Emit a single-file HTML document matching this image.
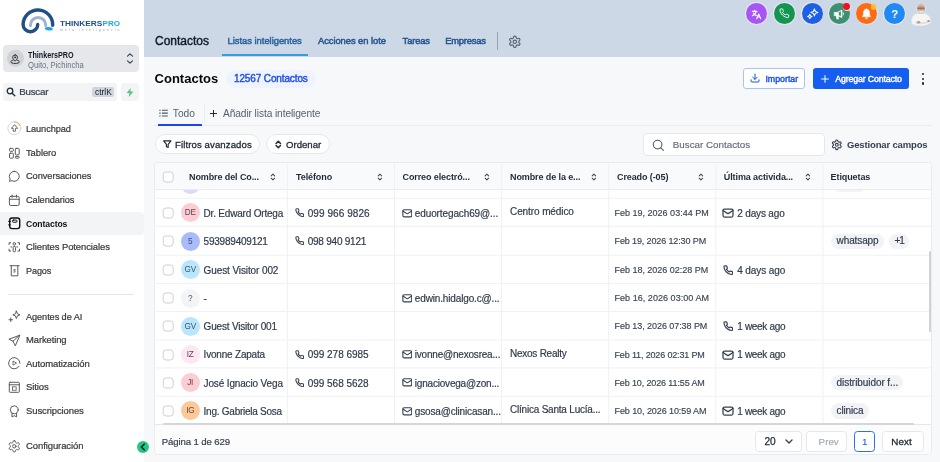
<!DOCTYPE html>
<html lang="es"><head><meta charset="utf-8"><title>Contactos</title>
<style>
*{box-sizing:border-box;margin:0;padding:0}
html,body{width:940px;height:462px;overflow:hidden;background:#f7f8fa;font-family:"Liberation Sans",sans-serif;color:#1f2937}
.abs{position:absolute}
#sb{position:absolute;left:0;top:0;width:144px;height:462px;background:#fff}
#hdr{position:absolute;left:144px;top:0;width:796px;height:56.6px;background:#cdd8e6}
#main{position:absolute;left:0;top:0;width:940px;height:462px}
#sb,#hdr,#main{will-change:transform}
.t{position:absolute;white-space:nowrap;line-height:1;transform-origin:0 50%}
.nav{position:absolute;left:26.1px;font-size:9.9px;color:#35383c;white-space:nowrap;line-height:12px;letter-spacing:-0.1px;-webkit-text-stroke:0.22px #35383c;transform:scaleX(0.943);transform-origin:0 50%}
.ht{top:35.8px;font-size:9.4px;color:#24538f;-webkit-text-stroke:0.48px currentColor}
.circ{position:absolute;top:4px;width:21px;height:21px;border-radius:50%}
.th{font-size:9px;font-weight:bold;color:#1f2937;letter-spacing:-0.1px}
.c{font-size:10px;color:#2f3949;-webkit-text-stroke:0.18px #2f3949}
.dt{font-size:9px;color:#3a4453;-webkit-text-stroke:0.15px #3a4453}
.av{width:19px;height:19px;border-radius:50%;font-size:8.2px;line-height:20.6px;text-align:center;letter-spacing:-0.3px;-webkit-text-stroke:0}
.tag{height:15.3px;border-radius:8px;background:#f1f3f6}
</style></head><body>
<div id="sb">
<svg class="abs" style="left:18px;top:5px" width="110" height="32" viewBox="0 0 110 32">
<path d="M34.7 20.2 A14.8 14.8 0 0 0 5.1 19.4 A7.3 7.3 0 0 0 19.7 19.4" fill="none" stroke="#1e4f86" stroke-width="3.4" stroke-linecap="round"/>
<path d="M12.5 20.6 V20 A7.6 7.6 0 0 1 27.7 20 V20.6" fill="none" stroke="#9fb3cf" stroke-width="3" stroke-linecap="round"/>
<ellipse cx="30.9" cy="23.8" rx="4" ry="1.7" fill="#1fa9e6" transform="rotate(8 30.9 23.8)"/>
<text x="42" y="20.8" font-family="Liberation Sans, sans-serif" font-weight="bold" font-size="6.5" fill="#1e4f86" textLength="42.4" lengthAdjust="spacingAndGlyphs">THINKERS</text>
<text x="84.6" y="20.8" font-family="Liberation Sans, sans-serif" font-weight="bold" font-size="6.5" fill="#1fa9e6" textLength="17.4" lengthAdjust="spacingAndGlyphs">PRO</text>
<text x="42" y="26.1" font-family="Liberation Sans, sans-serif" font-size="3.4" fill="#93a7c6" textLength="59.5" lengthAdjust="spacing">meta inteligencia</text>
</svg>
<div class="abs" style="left:3px;top:45px;width:136px;height:27px;background:#e5e7eb;border-radius:4px"></div>
<svg class="abs" style="left:6px;top:48px" width="20" height="20" viewBox="0 0 20 20"><circle cx="9.45" cy="10.35" r="8.5" fill="#d1d2d5"/></svg>
<svg class="abs" style="left:10.4px;top:53.6px" width="10.2" height="10.2" viewBox="0 0 10 10" fill="none" stroke="#2f3136" stroke-width="0.95" stroke-linecap="round" stroke-linejoin="round"><path d="M5 0.9 A2.4 2.4 0 0 1 7.4 3.3 C7.4 5 5 7 5 7 S2.6 5 2.6 3.3 A2.4 2.4 0 0 1 5 0.900000 Z"/><circle cx="5" cy="3.3" r="0.55" fill="#2f3136"/><path d="M3 6.1 C1.600000 6.5 0.8 7.1 0.8 7.7 C0.8 8.7 2.7 9.3 5 9.3 S9.2 8.7 9.2 7.7 C9.2 7.1 8.4 6.5 7 6.1"/></svg>
<div class="t" style="left:28.4px;top:50.8px;font-size:8.4px;font-weight:bold;color:#111827;transform:scaleX(0.857)">ThinkersPRO</div>
<div class="t" style="left:28.4px;top:61.8px;font-size:8.2px;color:#6b7280;transform:scaleX(0.935)">Quito, Pichincha</div>
<svg class="abs" style="left:126px;top:52px" width="8" height="13" viewBox="0 0 8 13" fill="none" stroke="#374151" stroke-width="1.15" stroke-linecap="round" stroke-linejoin="round"><path d="M1.5 4.2 L4 1.8 L6.5 4.2M1.5 8.8 L4 11.2 L6.5 8.8"/></svg>
<div class="abs" style="left:3px;top:83px;width:114px;height:18px;background:#f3f4f6;border-radius:3px"></div>
<svg class="abs" style="left:6px;top:87px" width="10" height="10" viewBox="0 0 10 10" fill="none" stroke="#1f2937" stroke-width="1.3" stroke-linecap="round"><circle cx="4" cy="4" r="2.8"/><path d="M6.2 6.2 L8.8 8.8"/></svg>
<div class="t" style="left:19.2px;top:87.1px;font-size:9.8px;color:#333b48;letter-spacing:-0.25px;-webkit-text-stroke:0.2px #333b48">Buscar</div>
<div class="abs" style="left:92px;top:86.8px;width:21.6px;height:10.6px;background:#d1d5db;border-radius:2px"></div>
<div class="t" style="left:95px;top:87.8px;font-size:8.4px;color:#111827">ctrlK</div>
<div class="abs" style="left:121px;top:83px;width:18px;height:18px;background:#f3f4f6;border-radius:3px"></div>
<svg class="abs" style="left:126px;top:88px" width="8" height="9" viewBox="0 0 8 9"><path d="M4.8 0 L0.6 5 H3.4 L2.8 9 L7.4 3.6 H4.4 Z" fill="#52c47e"/></svg>
<div class="abs" style="left:0;top:212.1px;width:144px;height:23.1px;background:#f3f4f6;border-radius:0 4px 4px 0"></div>
<div class="abs" style="left:8px;top:293.5px;width:126px;height:1px;background:#e5e7eb"></div>
<svg class="abs" style="left:7.1px;top:121.4px" width="14.6" height="14.6" viewBox="0 0 14 14" fill="none" stroke="#55585e" stroke-width="0.95" stroke-linecap="round"><circle cx="7" cy="7" r="6.2" stroke="#d1d5db" stroke-width="0.9"/><path d="M7 0.8 A6.2 6.2 0 0 1 12.6 4.4" stroke="#f59e5b" stroke-width="0.9"/><path d="M7 3.8 L4.2 7 H5.9 V9.8 H8.1 V7 H9.8 Z" stroke="#4b5563" stroke-width="0.8" stroke-linejoin="round"/></svg>
<div class="nav" style="top:122.7px;transform:scaleX(0.934)">Launchpad</div>
<svg class="abs" style="left:7.1px;top:145.5px" width="14.6" height="14.6" viewBox="0 0 14 14" fill="none" stroke="#55585e" stroke-width="0.95" stroke-linecap="round"><rect x="2.4" y="2.3" width="3.7" height="2.8" rx="0.8"/><rect x="8" y="2.3" width="3.7" height="6.2" rx="0.8"/><rect x="2.4" y="6.9" width="3.7" height="4.8" rx="0.8"/><rect x="8" y="10" width="3.7" height="1.7" rx="0.7"/></svg>
<div class="nav" style="top:146.8px;transform:scaleX(0.954)">Tablero</div>
<svg class="abs" style="left:7.1px;top:168.8px" width="14.6" height="14.6" viewBox="0 0 14 14" fill="none" stroke="#55585e" stroke-width="0.95" stroke-linecap="round"><path d="M7 2.2 A4.8 4.8 0 1 1 4.6 11.2 L2.4 11.8 L3 9.6 A4.8 4.8 0 0 1 7 2.2 Z"/></svg>
<div class="nav" style="top:170.1px;transform:scaleX(0.941)">Conversaciones</div>
<svg class="abs" style="left:7.1px;top:192.6px" width="14.6" height="14.6" viewBox="0 0 14 14" fill="none" stroke="#55585e" stroke-width="0.95" stroke-linecap="round"><rect x="2.3" y="3.2" width="9.4" height="8.8" rx="1.4"/><path d="M2.3 6 H11.7 M4.9 2 V4.2 M9.1 2 V4.2"/></svg>
<div class="nav" style="top:193.9px;transform:scaleX(0.936)">Calendarios</div>
<svg class="abs" style="left:7.1px;top:216.3px" width="14.6" height="14.6" viewBox="0 0 14 14" fill="none" stroke="#55585e" stroke-width="0.95" stroke-linecap="round"><rect x="2.6" y="1.9" width="9.6" height="10.2" rx="2.2" stroke="#111" stroke-width="1.35"/><path d="M1.7 5.2 H3 M1.7 8.4 H3" stroke="#111" stroke-width="1.2"/><rect x="5.2" y="3.9" width="4.4" height="2.1" rx="1" stroke="#111" stroke-width="0.95"/></svg>
<div class="nav" style="top:217.6px;font-weight:bold;color:#111;-webkit-text-stroke:0;letter-spacing:-0.1px;transform:scaleX(0.872)">Contactos</div>
<svg class="abs" style="left:7.1px;top:240.1px" width="14.6" height="14.6" viewBox="0 0 14 14" fill="none" stroke="#55585e" stroke-width="0.95" stroke-linecap="round"><circle cx="7" cy="3.6" r="1.2"/><rect x="5.9" y="6" width="2.2" height="5.4" rx="1.1"/><path d="M2 4.400000 V2.6 H3.6 M12 4.4 V2.6 H10.4 M2 8.8 V10.6 H3.6 M12 8.8 V10.6 H10.4 M3.8 6.7 H4.6 M9.4 6.7 H10.2" stroke-width="0.95"/></svg>
<div class="nav" style="top:241.4px;transform:scaleX(0.958)">Clientes Potenciales</div>
<svg class="abs" style="left:7.1px;top:263.4px" width="14.6" height="14.6" viewBox="0 0 14 14" fill="none" stroke="#55585e" stroke-width="0.95" stroke-linecap="round"><path d="M4.1 2.6 V12.3 H10.4 V2.6 M2.9 2.6 H11.6"/><path d="M8 6.2 H6.6 V7.4 H7.8 V8.700000 H6.3" stroke-width="0.7"/></svg>
<div class="nav" style="top:264.7px;transform:scaleX(0.918)">Pagos</div>
<svg class="abs" style="left:7.1px;top:309.4px" width="14.6" height="14.6" viewBox="0 0 14 14" fill="none" stroke="#55585e" stroke-width="0.95" stroke-linecap="round"><path d="M9 2 L10 4.6 L12.4 5.6 L10 6.6 L9 9.2 L8 6.6 L5.6 5.6 L8 4.6 Z"/><path d="M3.6 8.6 V12 M1.9 10.3 H5.3" /></svg>
<div class="nav" style="top:310.7px;transform:scaleX(0.933)">Agentes de AI</div>
<svg class="abs" style="left:7.1px;top:332.8px" width="14.6" height="14.6" viewBox="0 0 14 14" fill="none" stroke="#55585e" stroke-width="0.95" stroke-linecap="round"><path d="M12 2.2 L1.8 6 L5.8 7.8 L7.8 12 Z M5.8 7.8 L12 2.2"/></svg>
<div class="nav" style="top:334.1px;transform:scaleX(0.954)">Marketing</div>
<svg class="abs" style="left:7.1px;top:356.4px" width="14.6" height="14.6" viewBox="0 0 14 14" fill="none" stroke="#55585e" stroke-width="0.95" stroke-linecap="round"><path d="M11.6 9.8 A5.4 5.4 0 1 1 12.4 7"/><path d="M5.8 5.2 V8.8 L8.8 7 Z" stroke-width="0.8"/></svg>
<div class="nav" style="top:357.7px;transform:scaleX(0.962)">Automatización</div>
<svg class="abs" style="left:7.1px;top:380.1px" width="14.6" height="14.6" viewBox="0 0 14 14" fill="none" stroke="#55585e" stroke-width="0.95" stroke-linecap="round"><rect x="2.2" y="2.2" width="9.6" height="9.6" rx="0.8"/><path d="M2.2 4.6 H11.8"/><rect x="5.2" y="6.6" width="3.6" height="3.2" stroke-width="0.8"/></svg>
<div class="nav" style="top:381.4px;transform:scaleX(0.966)">Sitios</div>
<svg class="abs" style="left:7.1px;top:403.7px" width="14.6" height="14.6" viewBox="0 0 14 14" fill="none" stroke="#55585e" stroke-width="0.95" stroke-linecap="round"><circle cx="7" cy="5.6" r="3.8"/><path d="M4.8 8.8 V12.4 L7 11.2 L9.2 12.4 V8.8"/></svg>
<div class="nav" style="top:405.0px;transform:scaleX(0.960)">Suscripciones</div>
<svg class="abs" style="left:7.1px;top:438.8px" width="14.6" height="14.6" viewBox="0 0 14 14" fill="none" stroke="#55585e" stroke-width="0.95" stroke-linecap="round"><g transform="scale(0.5417) translate(0.9,0.9)" stroke-width="1.75" stroke-linejoin="round"><path d="M12.22 2h-.44a2 2 0 0 0-2 2v.18a2 2 0 0 1-1 1.73l-.43.25a2 2 0 0 1-2 0l-.15-.08a2 2 0 0 0-2.73.73l-.22.38a2 2 0 0 0 .73 2.73l.15.1a2 2 0 0 1 1 1.72v.51a2 2 0 0 1-1 1.74l-.15.09a2 2 0 0 0-.73 2.73l.22.38a2 2 0 0 0 2.73.73l.15-.08a2 2 0 0 1 2 0l.43.25a2 2 0 0 1 1 1.73V20a2 2 0 0 0 2 2h.44a2 2 0 0 0 2-2v-.18a2 2 0 0 1 1-1.73l.43-.25a2 2 0 0 1 2 0l.15.08a2 2 0 0 0 2.73-.73l.22-.39a2 2 0 0 0-.73-2.73l-.15-.08a2 2 0 0 1-1-1.74v-.5a2 2 0 0 1 1-1.74l.15-.09a2 2 0 0 0 .73-2.73l-.22-.38a2 2 0 0 0-2.73-.73l-.15.08a2 2 0 0 1-2 0l-.43-.25a2 2 0 0 1-1-1.73V4a2 2 0 0 0-2-2z"/><circle cx="12" cy="12" r="3"/></g></svg>
<div class="nav" style="top:440.1px;transform:scaleX(0.962)">Configuración</div>
</div>
<div class="abs" style="left:135.6px;top:439.8px;width:14.6px;height:14.6px;border-radius:50%;background:#fff;z-index:5"></div><div class="abs" style="left:136.5px;top:440.7px;width:12.8px;height:12.8px;border-radius:50%;background:#20c888;z-index:5"></div>
<svg class="abs" style="left:136.9px;top:441.1px;z-index:6" width="12" height="12" viewBox="0 0 12 12" fill="none" stroke="#0b1a14" stroke-width="1.5" stroke-linecap="round" stroke-linejoin="round"><path d="M7.4 3 L4.4 6 L7.4 9"/></svg>
<div id="hdr">
<div class="t" style="left:11px;top:34.8px;font-size:12px;color:#111827;-webkit-text-stroke:0.4px #111827">Contactos</div>
<div class="t ht" style="left:83.6px;color:#2b62a0;letter-spacing:-0.02px">Listas inteligentes</div>
<div class="abs" style="left:78px;top:54px;width:86px;height:2px;background:#3b9ad9"></div>
<div class="t ht" style="left:174px;letter-spacing:-0.06px">Acciones en lote</div>
<div class="t ht" style="left:258.6px;letter-spacing:-0.15px">Tareas</div>
<div class="t ht" style="left:301.2px;letter-spacing:-0.22px">Empresas</div>
<div class="abs" style="left:352.5px;top:32px;width:1px;height:18px;background:#9ca3af"></div>
<svg class="abs" style="left:363.5px;top:34.6px" width="13.6" height="13.6" viewBox="0 0 24 24" fill="none" stroke="#5a6270" stroke-width="2" stroke-linejoin="round"><path d="M12.22 2h-.44a2 2 0 0 0-2 2v.18a2 2 0 0 1-1 1.73l-.43.25a2 2 0 0 1-2 0l-.15-.08a2 2 0 0 0-2.73.73l-.22.38a2 2 0 0 0 .73 2.73l.15.1a2 2 0 0 1 1 1.72v.51a2 2 0 0 1-1 1.74l-.15.09a2 2 0 0 0-.73 2.73l.22.38a2 2 0 0 0 2.73.73l.15-.08a2 2 0 0 1 2 0l.43.25a2 2 0 0 1 1 1.73V20a2 2 0 0 0 2 2h.44a2 2 0 0 0 2-2v-.18a2 2 0 0 1 1-1.73l.43-.25a2 2 0 0 1 2 0l.15.08a2 2 0 0 0 2.73-.73l.22-.39a2 2 0 0 0-.73-2.73l-.15-.08a2 2 0 0 1-1-1.74v-.5a2 2 0 0 1 1-1.74l.15-.09a2 2 0 0 0 .73-2.73l-.22-.38a2 2 0 0 0-2.73-.73l-.15.08a2 2 0 0 1-2 0l-.43-.25a2 2 0 0 1-1-1.73V4a2 2 0 0 0-2-2z"/><circle cx="12" cy="12" r="3"/></svg>
<div class="abs" style="left:601.2px;top:2.4px;width:22.6px;height:22.6px;border-radius:50%;background:#e3e6f3"></div>
<div class="abs" style="left:602.0px;top:3.2px;width:21.0px;height:21.0px;border-radius:50%;background:#a855f5"></div>
<svg class="abs" style="left:607.2px;top:8.5px" width="11" height="11" viewBox="0 0 24 24" fill="none" stroke="#fff" stroke-width="2.6" stroke-linecap="round" stroke-linejoin="round"><path d="M3 5h10M8 3v2M11.5 5c-.8 4.2-3.7 7.6-8 9.5M5.5 9c1 2.2 3.2 4.4 6 5.5"/><path d="M12.5 21l4.2-10 4.3 10M14 17.5h5.6"/></svg>
<div class="abs" style="left:629.1px;top:2.4px;width:22.6px;height:22.6px;border-radius:50%;background:#e6e3f1"></div>
<div class="abs" style="left:629.9px;top:3.2px;width:21.0px;height:21.0px;border-radius:50%;background:#12964f"></div>
<svg class="abs" style="left:635.1px;top:8.4px" width="10.5" height="10.5" viewBox="0 0 24 24" fill="none" stroke="#fff" stroke-width="2.1" stroke-linecap="round" stroke-linejoin="round"><path d="M22 16.92v3a2 2 0 0 1-2.18 2 19.79 19.79 0 0 1-8.63-3.07 19.5 19.5 0 0 1-6-6 19.79 19.79 0 0 1-3.07-8.67A2 2 0 0 1 4.11 2h3a2 2 0 0 1 2 1.72 12.84 12.84 0 0 0 .7 2.81 2 2 0 0 1-.45 2.11L8.09 9.91a16 16 0 0 0 6 6l1.27-1.27a2 2 0 0 1 2.11-.45 12.84 12.84 0 0 0 2.81.7A2 2 0 0 1 22 16.92z"/></svg>
<div class="abs" style="left:656.7px;top:2.4px;width:22.6px;height:22.6px;border-radius:50%;background:#e9e6e0"></div>
<div class="abs" style="left:657.5px;top:3.2px;width:21.0px;height:21.0px;border-radius:50%;background:#1d5fe6"></div>
<svg class="abs" style="left:661.5px;top:7.2px" width="13" height="13" viewBox="0 0 24 24" fill="none" stroke="#fff" stroke-width="1.9" stroke-linecap="round" stroke-linejoin="round"><path d="M15.5 3.5 L17.3 8.2 L22 10 L17.3 11.8 L15.5 16.5 L13.7 11.8 L9 10 L13.7 8.2 Z"/><path d="M7 13.5 L8.2 16.3 L11 17.5 L8.2 18.7 L7 21.5 L5.8 18.7 L3 17.5 L5.8 16.3 Z"/></svg>
<div class="abs" style="left:683.8px;top:2.6px;width:22.6px;height:22.6px;border-radius:50%;background:#e6e3f1"></div>
<div class="abs" style="left:684.6px;top:3.4px;width:21.0px;height:21.0px;border-radius:50%;background:#3f8f72"></div>
<svg class="abs" style="left:688.5px;top:7.9px" width="12.6" height="12.6" viewBox="0 0 24 24"  stroke-linecap="round" stroke-linejoin="round"><path d="M3 8.5 H8 L17 4 V18 L8 14.5 H3 Z M6 14.5 L7.5 21 H10.5 L9.5 14.5 M19.5 8.5 Q21.5 11 19.5 13.5" fill="#fff" stroke="#fff" stroke-width="1.4"/><path d="M11 8.2 L15 6.4 V15.4 L11 13.8 Z" fill="#3f8f72" stroke="none"/></svg>
<div class="abs" style="left:698.7px;top:2.6px;width:8.2px;height:8.2px;border-radius:50%;background:#dcecf0"></div>
<div class="abs" style="left:699.4px;top:3.3px;width:6.8px;height:6.8px;border-radius:50%;background:#f5101e"></div>
<div class="abs" style="left:711.5px;top:2.5px;width:22.8px;height:22.8px;border-radius:50%;background:#d5e6f5"></div>
<div class="abs" style="left:712.3px;top:3.3px;width:21.2px;height:21.2px;border-radius:50%;background:#ff6a13"></div>
<svg class="abs" style="left:717.4px;top:8.1px" width="11" height="12" viewBox="0 0 22 24"  stroke-linecap="round" stroke-linejoin="round"><path d="M11 2.2 C6.6 2.2 5 6 5 9.4 V13 L2.8 17.4 H19.2 L17 13 V9.400000000000001 C17 6 15.4 2.2 11 2.2 Z M8.8 20 A2.3 2.3 0 0 0 13.2 20 Z" fill="#fff" stroke="#fff" stroke-width="1"/></svg>
<div class="abs" style="left:726.9px;top:4.3px;width:5.4px;height:5.4px;border-radius:50%;background:#fbbf24"></div>
<div class="abs" style="left:739.2px;top:2.6px;width:22.6px;height:22.6px;border-radius:50%;background:#ece4df"></div>
<div class="abs" style="left:740.0px;top:3.4px;width:21.0px;height:21.0px;border-radius:50%;background:#1f8af5"></div>
<div class="t" style="left:747.3px;top:8.7px;font-size:11.5px;font-weight:bold;color:#fff">?</div>
<svg class="abs" style="left:764px;top:0px" width="26" height="28" viewBox="0 0 26 28"><g stroke="#dde8f4" stroke-width="1.6" stroke-linejoin="round"><path d="M4.200000 23.5 Q3.2 16.5 8 14.6 L13 13.2 L18 14.6 Q22.6 16.4 22.3 22.5 Q18 25.6 13 25.2 Q8 25.6 4.2 23.5 Z" fill="#f4f4f3"/><ellipse cx="13" cy="8.8" rx="4" ry="5.2" fill="#c79f86"/></g><path d="M4.2 23.5 Q3.2 16.5 8 14.6 L13 13.2 L18 14.6 Q22.6 16.4 22.3 22.5 Q18 25.6 13 25.2 Q8 25.6 4.2 23.5 Z" fill="#f5f5f4"/><path d="M7.5 21.2 Q13 24.2 21.6 20.2 L21.8 22.3 Q14 25.8 7.2 23.2 Z" fill="#e4dcd6"/><ellipse cx="10.6" cy="22.2" rx="1.7" ry="1.2" fill="#c39a80"/><ellipse cx="20.6" cy="21" rx="1.5" ry="1.1" fill="#c39a80"/><ellipse cx="13" cy="8.8" rx="4" ry="5.2" fill="#c9a189"/><path d="M9.2 7 Q9.3 3.8 13 3.600000 Q16.7 3.8 16.8 7 Q15 5.2 13 5.2 Q11 5.2 9.2 7 Z" fill="#d9c2b2"/><path d="M9.3 10 Q13 12.2 16.7 10 Q16.4 13.6 13 14.2 Q9.6 13.600000 9.3 10 Z" fill="#dcd6d0"/><path d="M11.4 11 Q13 12.1 14.6 11" stroke="#fff" stroke-width="0.7" fill="none"/><path d="M9.4 8.2 H16.6" stroke="#5a4f4a" stroke-width="0.75" fill="none"/></svg>
</div>
<div id="main">
<div class="t" style="left:154.6px;top:72.3px;font-size:13px;font-weight:bold;color:#05070c;">Contactos</div>
<div class="abs" style="left:226px;top:69.6px;width:89.5px;height:18px;border-radius:9px;background:#eef3ff"></div>
<div class="t" style="left:234px;top:73.6px;font-size:10px;color:#1f50e6;-webkit-text-stroke:0.42px #1f50e6;letter-spacing:-0.127px">12567 Contactos</div>
<div class="abs" style="left:742.8px;top:68px;width:62px;height:20.7px;border-radius:3px;background:#fff;border:1px solid #a9c3f7"></div>
<svg class="abs" style="left:749.5px;top:73px" width="10" height="10" viewBox="0 0 10 10" fill="none" stroke="#1750e0" stroke-width="1" stroke-linecap="round" stroke-linejoin="round"><path d="M5 1 V6.2 M2.8 4.2 L5 6.4 L7.2 4.2 M1 6.8 V8 Q1 9 2 9 H8 Q9 9 9 8 V6.8"/></svg>
<div class="t" style="left:765.4px;top:74.6px;font-size:8.8px;color:#1750e0;-webkit-text-stroke:0.4px #1750e0;letter-spacing:0px">Importar</div>
<div class="abs" style="left:812.7px;top:68px;width:96px;height:20.7px;border-radius:3px;background:#155eef"></div>
<svg class="abs" style="left:820.5px;top:74.5px" width="8" height="8" viewBox="0 0 8 8" stroke="#fff" stroke-width="1" stroke-linecap="round"><path d="M4 0.6 V7.4 M0.6 4 H7.4"/></svg>
<div class="t" style="left:835.3px;top:74.6px;font-size:8.8px;color:#fff;-webkit-text-stroke:0.4px #fff;letter-spacing:-0.15px">Agregar Contacto</div>
<div class="abs" style="left:921.8px;top:72.8px;width:2.4px;height:2.4px;border-radius:50%;background:#1f2937"></div>
<div class="abs" style="left:921.8px;top:77.6px;width:2.4px;height:2.4px;border-radius:50%;background:#1f2937"></div>
<div class="abs" style="left:921.8px;top:82.4px;width:2.4px;height:2.4px;border-radius:50%;background:#1f2937"></div>
<div class="abs" style="left:154px;top:125px;width:778.4px;height:1px;background:#eaecef"></div>
<svg class="abs" style="left:158.6px;top:108.9px" width="9.2" height="8.3" viewBox="0 0 10 9" stroke="#4b5563" stroke-width="1.2"><path d="M0.3 1.4 H1.8 M3.2 1.4 H9.6 M0.3 4.5 H1.8 M3.2 4.5 H9.6 M0.3 7.6 H1.8 M3.2 7.6 H9.6"/></svg>
<div class="t" style="left:172.8px;top:109px;font-size:10.2px;color:#566170">Todo</div>
<div class="abs" style="left:157.8px;top:124px;width:44.5px;height:2.2px;background:#1d45e3"></div>
<div class="abs" style="left:204px;top:103px;width:1px;height:23px;background:#eceef1"></div>
<svg class="abs" style="left:210px;top:109.5px" width="7" height="7" viewBox="0 0 7 7" stroke="#1f2937" stroke-width="1"><path d="M3.5 0 V7 M0 3.5 H7"/></svg>
<div class="t" style="left:223px;top:109px;font-size:10.2px;color:#566170;letter-spacing:-0.1px">Añadir lista inteligente</div>
<div class="abs" style="left:154.6px;top:134.4px;width:105.3px;height:19.6px;border-radius:10px;background:#fff;border:1px solid #e5e7eb"></div>
<svg class="abs" style="left:163px;top:140.2px" width="8.6" height="8.6" viewBox="0 0 8 8" fill="none" stroke="#1f2937" stroke-width="1.05" stroke-linejoin="round"><path d="M0.6 0.8 H7.4 L4.8 4 V7 L3.2 6.2 V4 Z"/></svg>
<div class="t" style="left:175px;top:139.5px;font-size:9.6px;color:#1f2937;-webkit-text-stroke:0.3px #1f2937;letter-spacing:0.1px">Filtros avanzados</div>
<div class="abs" style="left:265.5px;top:134.4px;width:64.3px;height:19.6px;border-radius:10px;background:#fff;border:1px solid #e5e7eb"></div>
<svg class="abs" style="left:275px;top:139.8px" width="6.6" height="9" viewBox="0 0 6 8" fill="none" stroke="#1f2937" stroke-width="1.35" stroke-linecap="round" stroke-linejoin="round"><path d="M1 3 L3 1 L5 3 M1 5 L3 7 L5 5"/></svg>
<div class="t" style="left:286px;top:139.5px;font-size:9.6px;color:#1f2937;-webkit-text-stroke:0.3px #1f2937">Ordenar</div>
<div class="abs" style="left:643.2px;top:132.6px;width:182px;height:23.6px;border-radius:4px;background:#fff;border:1px solid #e5e7eb"></div>
<svg class="abs" style="left:652px;top:138.6px" width="12.4" height="12.4" viewBox="0 0 12 12" fill="none" stroke="#4b5563" stroke-width="1" stroke-linecap="round"><circle cx="5.4" cy="5.4" r="4.2"/><path d="M8.6 8.6 L11 11"/></svg>
<div class="t" style="left:672.8px;top:140.1px;font-size:9.8px;color:#626b78;-webkit-text-stroke:0.15px #626b78">Buscar Contactos</div>
<svg class="abs" style="left:831.2px;top:139px" width="11.6" height="11.6" viewBox="0 0 24 24" fill="none" stroke="#374151" stroke-width="2.3" stroke-linejoin="round"><path d="M12.22 2h-.44a2 2 0 0 0-2 2v.18a2 2 0 0 1-1 1.73l-.43.25a2 2 0 0 1-2 0l-.15-.08a2 2 0 0 0-2.73.73l-.22.38a2 2 0 0 0 .73 2.73l.15.1a2 2 0 0 1 1 1.72v.51a2 2 0 0 1-1 1.74l-.15.09a2 2 0 0 0-.73 2.73l.22.38a2 2 0 0 0 2.73.73l.15-.08a2 2 0 0 1 2 0l.43.25a2 2 0 0 1 1 1.73V20a2 2 0 0 0 2 2h.44a2 2 0 0 0 2-2v-.18a2 2 0 0 1 1-1.73l.43-.25a2 2 0 0 1 2 0l.15.08a2 2 0 0 0 2.73-.73l.22-.39a2 2 0 0 0-.73-2.73l-.15-.08a2 2 0 0 1-1-1.74v-.5a2 2 0 0 1 1-1.74l.15-.09a2 2 0 0 0 .73-2.73l-.22-.38a2 2 0 0 0-2.73-.73l-.15.08a2 2 0 0 1-2 0l-.43-.25a2 2 0 0 1-1-1.73V4a2 2 0 0 0-2-2z"/><circle cx="12" cy="12" r="3"/></svg>
<div class="t" style="left:847px;top:139.6px;font-size:9.5px;color:#374151;font-weight:bold;letter-spacing:-0.15px">Gestionar campos</div>
<div class="abs" style="left:154.4px;top:162.4px;width:777.8px;height:292.6px;background:#fff;border:1px solid #e9ebef;border-radius:4px"></div>
<div class="abs" style="left:155.4px;top:163.4px;width:775.2px;height:26.3px;background:#f9fafb;border-bottom:1px solid #e9ebef;border-radius:4px 4px 0 0"></div>
<div class="abs" style="left:155.4px;top:424.3px;width:775.2px;height:29.7px;background:#fcfcfd;border-top:1px solid #e5e7eb;border-radius:0 0 4px 4px"></div>
<svg class="abs" style="left:0;top:0" width="940" height="462" viewBox="0 0 940 462"><rect x="286.9" y="163.4" width="1" height="261" fill="#eff1f4"/><rect x="394.0" y="163.4" width="1" height="261" fill="#eff1f4"/><rect x="501.1" y="163.4" width="1" height="261" fill="#eff1f4"/><rect x="608.2" y="163.4" width="1" height="261" fill="#eff1f4"/><rect x="715.3" y="163.4" width="1" height="261" fill="#eff1f4"/><rect x="822.4" y="163.4" width="1" height="261" fill="#eff1f4"/><rect x="155.4" y="197.8" width="775.2" height="1" fill="#eff1f4"/><rect x="155.4" y="225.8" width="775.2" height="1" fill="#eff1f4"/><rect x="155.4" y="254.7" width="775.2" height="1" fill="#eff1f4"/><rect x="155.4" y="282.9" width="775.2" height="1" fill="#eff1f4"/><rect x="155.4" y="311.0" width="775.2" height="1" fill="#eff1f4"/><rect x="155.4" y="339.5" width="775.2" height="1" fill="#eff1f4"/><rect x="155.4" y="367.4" width="775.2" height="1" fill="#eff1f4"/><rect x="155.4" y="395.7" width="775.2" height="1" fill="#eff1f4"/></svg>
<div class="t th" style="left:189px;top:172.5px">Nombre del Co...</div>
<svg class="abs" style="left:270.0px;top:172.8px" width="5.8" height="8.1" viewBox="0 0 5 7" fill="none" stroke="#414a58" stroke-width="0.92" stroke-linecap="round" stroke-linejoin="round"><path d="M1 2.5 L2.5 1 L4 2.5 M1 4.5 L2.5 6 L4 4.5"/></svg>
<div class="t th" style="left:296px;top:172.5px">Teléfono</div>
<svg class="abs" style="left:376.8px;top:172.8px" width="5.8" height="8.1" viewBox="0 0 5 7" fill="none" stroke="#414a58" stroke-width="0.92" stroke-linecap="round" stroke-linejoin="round"><path d="M1 2.5 L2.5 1 L4 2.5 M1 4.5 L2.5 6 L4 4.5"/></svg>
<div class="t th" style="left:402.5px;top:172.5px">Correo electró...</div>
<svg class="abs" style="left:483.9px;top:172.8px" width="5.8" height="8.1" viewBox="0 0 5 7" fill="none" stroke="#414a58" stroke-width="0.92" stroke-linecap="round" stroke-linejoin="round"><path d="M1 2.5 L2.5 1 L4 2.5 M1 4.5 L2.5 6 L4 4.5"/></svg>
<div class="t th" style="left:510px;top:172.5px">Nombre de la e...</div>
<svg class="abs" style="left:591.0px;top:172.8px" width="5.8" height="8.1" viewBox="0 0 5 7" fill="none" stroke="#414a58" stroke-width="0.92" stroke-linecap="round" stroke-linejoin="round"><path d="M1 2.5 L2.5 1 L4 2.5 M1 4.5 L2.5 6 L4 4.5"/></svg>
<div class="t th" style="left:617px;top:172.5px">Creado (-05)</div>
<svg class="abs" style="left:697.9px;top:172.8px" width="5.8" height="8.1" viewBox="0 0 5 7" fill="none" stroke="#414a58" stroke-width="0.92" stroke-linecap="round" stroke-linejoin="round"><path d="M1 2.5 L2.5 1 L4 2.5 M1 4.5 L2.5 6 L4 4.5"/></svg>
<div class="t th" style="left:723.8px;top:172.5px">Última activida...</div>
<svg class="abs" style="left:805.2px;top:172.8px" width="5.8" height="8.1" viewBox="0 0 5 7" fill="none" stroke="#414a58" stroke-width="0.92" stroke-linecap="round" stroke-linejoin="round"><path d="M1 2.5 L2.5 1 L4 2.5 M1 4.5 L2.5 6 L4 4.5"/></svg>
<div class="t th" style="left:830.6px;top:172.5px">Etiquetas</div>
<svg class="abs" style="left:161px;top:170.3px" width="14" height="14" viewBox="0 0 14 14"><rect x="2.2" y="2" width="10" height="10" rx="2.8" fill="#fff" stroke="#cbd0d8" stroke-width="1"/></svg>
<svg class="abs" style="left:161px;top:205.9px" width="14" height="14" viewBox="0 0 14 14"><rect x="2.2" y="2" width="10" height="10" rx="2.8" fill="#fff" stroke="#cbd0d8" stroke-width="1"/></svg>
<div class="abs av" style="left:180.7px;top:203.4px;background:#fecdd3;color:#5b4552">DE</div>
<div class="t c nm" style="left:203.6px;top:208.8px;letter-spacing:-0.195px;">Dr. Edward Ortega</div>
<svg class="abs" style="left:295px;top:208.0px" width="9.4" height="9.4" viewBox="0 0 24 24" fill="none" stroke="#374151" stroke-width="2.7" stroke-linecap="round" stroke-linejoin="round"><path d="M22 16.92v3a2 2 0 0 1-2.18 2 19.79 19.79 0 0 1-8.63-3.07 19.5 19.5 0 0 1-6-6 19.79 19.79 0 0 1-3.07-8.67A2 2 0 0 1 4.11 2h3a2 2 0 0 1 2 1.72 12.84 12.84 0 0 0 .7 2.81 2 2 0 0 1-.45 2.11L8.09 9.91a16 16 0 0 0 6 6l1.27-1.27a2 2 0 0 1 2.11-.45 12.84 12.84 0 0 0 2.81.7A2 2 0 0 1 22 16.92z"/></svg>
<div class="t c" style="left:307.7px;top:208.8px;letter-spacing:0.069px;">099 966 9826</div>
<svg class="abs" style="left:401.6px;top:207.6px" width="10.6" height="10.6" viewBox="0 0 24 24" fill="none" stroke="#374151" stroke-width="2.5" stroke-linecap="round" stroke-linejoin="round"><rect x="2" y="4" width="20" height="16" rx="3"/><path d="m22 7-8.97 5.7a1.94 1.94 0 0 1-2.06 0L2 7"/></svg>
<div class="t c" style="left:414.8px;top:208.8px;letter-spacing:-0.112px;">eduortegach69@...</div>
<div class="t c" style="left:510px;top:207.1px;letter-spacing:-0.095px;">Centro médico</div>
<div class="t c dt" style="left:614.5px;top:208.9px;letter-spacing:0.006px;">Feb 19, 2026 03:44 PM</div>
<svg class="abs" style="left:722.3px;top:207.2px" width="12" height="12" viewBox="0 0 24 24" fill="none" stroke="#374151" stroke-width="2.5" stroke-linecap="round" stroke-linejoin="round"><rect x="2" y="4" width="20" height="16" rx="3"/><path d="m22 7-8.97 5.7a1.94 1.94 0 0 1-2.06 0L2 7"/></svg>
<div class="t c" style="left:737.2px;top:208.8px;letter-spacing:-0.153px;">2 days ago</div>
<svg class="abs" style="left:161px;top:234.3px" width="14" height="14" viewBox="0 0 14 14"><rect x="2.2" y="2" width="10" height="10" rx="2.8" fill="#fff" stroke="#cbd0d8" stroke-width="1"/></svg>
<div class="abs av" style="left:180.7px;top:231.8px;background:#a9bbfb;color:#3f4a7a">5</div>
<div class="t c nm" style="left:203.6px;top:237.2px;letter-spacing:-0.22px;">593989409121</div>
<svg class="abs" style="left:295px;top:236.4px" width="9.4" height="9.4" viewBox="0 0 24 24" fill="none" stroke="#374151" stroke-width="2.7" stroke-linecap="round" stroke-linejoin="round"><path d="M22 16.92v3a2 2 0 0 1-2.18 2 19.79 19.79 0 0 1-8.63-3.07 19.5 19.5 0 0 1-6-6 19.79 19.79 0 0 1-3.07-8.67A2 2 0 0 1 4.11 2h3a2 2 0 0 1 2 1.72 12.84 12.84 0 0 0 .7 2.81 2 2 0 0 1-.45 2.11L8.09 9.91a16 16 0 0 0 6 6l1.27-1.27a2 2 0 0 1 2.11-.45 12.84 12.84 0 0 0 2.81.7A2 2 0 0 1 22 16.92z"/></svg>
<div class="t c" style="left:307.7px;top:237.2px;letter-spacing:-0.231px;">098 940 9121</div>
<div class="t c dt" style="left:614.5px;top:237.3px;letter-spacing:-0.122px;">Feb 19, 2026 12:30 PM</div>
<div class="abs tag" style="left:831.2px;top:233.8px;width:52.6px"></div>
<div class="t c" style="left:836.6px;top:236.4px;color:#333d4d;letter-spacing:-0.113px;">whatsapp</div>
<div class="abs tag" style="left:889.1px;top:233.8px;width:20.0px"></div>
<div class="t c" style="left:894.5px;top:236.4px;color:#333d4d;letter-spacing:-1.051px;">+1</div>
<svg class="abs" style="left:161px;top:262.9px" width="14" height="14" viewBox="0 0 14 14"><rect x="2.2" y="2" width="10" height="10" rx="2.8" fill="#fff" stroke="#cbd0d8" stroke-width="1"/></svg>
<div class="abs av" style="left:180.7px;top:260.4px;background:#bae6fd;color:#3c5566">GV</div>
<div class="t c nm" style="left:203.6px;top:265.8px;letter-spacing:-0.107px;">Guest Visitor 002</div>
<div class="t c dt" style="left:614.5px;top:265.9px;letter-spacing:-0.022px;">Feb 18, 2026 02:28 PM</div>
<svg class="abs" style="left:722.8px;top:264.7px" width="10.4" height="10.4" viewBox="0 0 24 24" fill="none" stroke="#374151" stroke-width="2.7" stroke-linecap="round" stroke-linejoin="round"><path d="M22 16.92v3a2 2 0 0 1-2.18 2 19.79 19.79 0 0 1-8.63-3.07 19.5 19.5 0 0 1-6-6 19.79 19.79 0 0 1-3.07-8.67A2 2 0 0 1 4.11 2h3a2 2 0 0 1 2 1.72 12.84 12.84 0 0 0 .7 2.81 2 2 0 0 1-.45 2.11L8.09 9.91a16 16 0 0 0 6 6l1.27-1.27a2 2 0 0 1 2.11-.45 12.84 12.84 0 0 0 2.81.7A2 2 0 0 1 22 16.92z"/></svg>
<div class="t c" style="left:737.2px;top:265.8px;letter-spacing:-0.083px;">4 days ago</div>
<svg class="abs" style="left:161px;top:291.1px" width="14" height="14" viewBox="0 0 14 14"><rect x="2.2" y="2" width="10" height="10" rx="2.8" fill="#fff" stroke="#cbd0d8" stroke-width="1"/></svg>
<div class="abs av" style="left:180.7px;top:288.6px;background:#f3f4f6;color:#4b5563">?</div>
<div class="t c nm" style="left:203.6px;top:293.9px;">-</div>
<svg class="abs" style="left:401.6px;top:292.8px" width="10.6" height="10.6" viewBox="0 0 24 24" fill="none" stroke="#374151" stroke-width="2.5" stroke-linecap="round" stroke-linejoin="round"><rect x="2" y="4" width="20" height="16" rx="3"/><path d="m22 7-8.97 5.7a1.94 1.94 0 0 1-2.06 0L2 7"/></svg>
<div class="t c" style="left:414.8px;top:293.9px;letter-spacing:-0.143px;">edwin.hidalgo.c@...</div>
<div class="t c dt" style="left:614.5px;top:294.1px;letter-spacing:0.044px;">Feb 16, 2026 03:00 AM</div>
<svg class="abs" style="left:161px;top:319.4px" width="14" height="14" viewBox="0 0 14 14"><rect x="2.2" y="2" width="10" height="10" rx="2.8" fill="#fff" stroke="#cbd0d8" stroke-width="1"/></svg>
<div class="abs av" style="left:180.7px;top:316.9px;background:#bae6fd;color:#3c5566">GV</div>
<div class="t c nm" style="left:203.6px;top:322.2px;letter-spacing:-0.196px;">Guest Visitor 001</div>
<div class="t c dt" style="left:614.5px;top:322.4px;letter-spacing:-0.06px;">Feb 13, 2026 07:38 PM</div>
<svg class="abs" style="left:722.8px;top:321.2px" width="10.4" height="10.4" viewBox="0 0 24 24" fill="none" stroke="#374151" stroke-width="2.7" stroke-linecap="round" stroke-linejoin="round"><path d="M22 16.92v3a2 2 0 0 1-2.18 2 19.79 19.79 0 0 1-8.63-3.07 19.5 19.5 0 0 1-6-6 19.79 19.79 0 0 1-3.07-8.67A2 2 0 0 1 4.11 2h3a2 2 0 0 1 2 1.72 12.84 12.84 0 0 0 .7 2.81 2 2 0 0 1-.45 2.11L8.09 9.91a16 16 0 0 0 6 6l1.27-1.27a2 2 0 0 1 2.11-.45 12.84 12.84 0 0 0 2.81.7A2 2 0 0 1 22 16.92z"/></svg>
<div class="t c" style="left:737.2px;top:322.2px;letter-spacing:-0.305px;">1 week ago</div>
<svg class="abs" style="left:161px;top:347.6px" width="14" height="14" viewBox="0 0 14 14"><rect x="2.2" y="2" width="10" height="10" rx="2.8" fill="#fff" stroke="#cbd0d8" stroke-width="1"/></svg>
<div class="abs av" style="left:180.7px;top:345.1px;background:#fce7f3;color:#5b4552">IZ</div>
<div class="t c nm" style="left:203.6px;top:350.4px;letter-spacing:-0.203px;">Ivonne Zapata</div>
<svg class="abs" style="left:295px;top:349.7px" width="9.4" height="9.4" viewBox="0 0 24 24" fill="none" stroke="#374151" stroke-width="2.7" stroke-linecap="round" stroke-linejoin="round"><path d="M22 16.92v3a2 2 0 0 1-2.18 2 19.79 19.79 0 0 1-8.63-3.07 19.5 19.5 0 0 1-6-6 19.79 19.79 0 0 1-3.07-8.67A2 2 0 0 1 4.11 2h3a2 2 0 0 1 2 1.72 12.84 12.84 0 0 0 .7 2.81 2 2 0 0 1-.45 2.11L8.09 9.91a16 16 0 0 0 6 6l1.27-1.27a2 2 0 0 1 2.11-.45 12.84 12.84 0 0 0 2.81.7A2 2 0 0 1 22 16.92z"/></svg>
<div class="t c" style="left:307.7px;top:350.4px;letter-spacing:-0.023px;">099 278 6985</div>
<svg class="abs" style="left:401.6px;top:349.2px" width="10.6" height="10.6" viewBox="0 0 24 24" fill="none" stroke="#374151" stroke-width="2.5" stroke-linecap="round" stroke-linejoin="round"><rect x="2" y="4" width="20" height="16" rx="3"/><path d="m22 7-8.97 5.7a1.94 1.94 0 0 1-2.06 0L2 7"/></svg>
<div class="t c" style="left:414.8px;top:350.4px;letter-spacing:-0.205px;">ivonne@nexosrea...</div>
<div class="t c" style="left:510px;top:348.8px;letter-spacing:-0.247px;">Nexos Realty</div>
<div class="t c dt" style="left:614.5px;top:350.6px;letter-spacing:-0.152px;">Feb 11, 2026 02:31 PM</div>
<svg class="abs" style="left:722.3px;top:348.9px" width="12" height="12" viewBox="0 0 24 24" fill="none" stroke="#374151" stroke-width="2.5" stroke-linecap="round" stroke-linejoin="round"><rect x="2" y="4" width="20" height="16" rx="3"/><path d="m22 7-8.97 5.7a1.94 1.94 0 0 1-2.06 0L2 7"/></svg>
<div class="t c" style="left:737.2px;top:350.4px;letter-spacing:-0.305px;">1 week ago</div>
<svg class="abs" style="left:161px;top:375.6px" width="14" height="14" viewBox="0 0 14 14"><rect x="2.2" y="2" width="10" height="10" rx="2.8" fill="#fff" stroke="#cbd0d8" stroke-width="1"/></svg>
<div class="abs av" style="left:180.7px;top:373.1px;background:#fecdd3;color:#5b4552">JI</div>
<div class="t c nm" style="left:203.6px;top:378.5px;letter-spacing:-0.149px;">José Ignacio Vega</div>
<svg class="abs" style="left:295px;top:377.8px" width="9.4" height="9.4" viewBox="0 0 24 24" fill="none" stroke="#374151" stroke-width="2.7" stroke-linecap="round" stroke-linejoin="round"><path d="M22 16.92v3a2 2 0 0 1-2.18 2 19.79 19.79 0 0 1-8.63-3.07 19.5 19.5 0 0 1-6-6 19.79 19.79 0 0 1-3.07-8.67A2 2 0 0 1 4.11 2h3a2 2 0 0 1 2 1.72 12.84 12.84 0 0 0 .7 2.81 2 2 0 0 1-.45 2.11L8.09 9.91a16 16 0 0 0 6 6l1.27-1.27a2 2 0 0 1 2.11-.45 12.84 12.84 0 0 0 2.81.7A2 2 0 0 1 22 16.92z"/></svg>
<div class="t c" style="left:307.7px;top:378.5px;letter-spacing:-0.023px;">099 568 5628</div>
<svg class="abs" style="left:401.6px;top:377.3px" width="10.6" height="10.6" viewBox="0 0 24 24" fill="none" stroke="#374151" stroke-width="2.5" stroke-linecap="round" stroke-linejoin="round"><rect x="2" y="4" width="20" height="16" rx="3"/><path d="m22 7-8.97 5.7a1.94 1.94 0 0 1-2.06 0L2 7"/></svg>
<div class="t c" style="left:414.8px;top:378.5px;letter-spacing:-0.199px;">ignaciovega@zon...</div>
<div class="t c dt" style="left:614.5px;top:378.6px;letter-spacing:-0.129px;">Feb 10, 2026 11:55 AM</div>
<div class="abs tag" style="left:831.2px;top:375.1px;width:72.3px"></div>
<div class="t c" style="left:836.6px;top:377.8px;color:#333d4d;letter-spacing:-0.071px;">distribuidor f...</div>
<svg class="abs" style="left:161px;top:403.9px" width="14" height="14" viewBox="0 0 14 14"><rect x="2.2" y="2" width="10" height="10" rx="2.8" fill="#fff" stroke="#cbd0d8" stroke-width="1"/></svg>
<div class="abs av" style="left:180.7px;top:401.4px;background:#fdc99b;color:#6b4a2b">IG</div>
<div class="t c nm" style="left:203.6px;top:406.8px;letter-spacing:-0.252px;">Ing. Gabriela Sosa</div>
<svg class="abs" style="left:401.6px;top:405.6px" width="10.6" height="10.6" viewBox="0 0 24 24" fill="none" stroke="#374151" stroke-width="2.5" stroke-linecap="round" stroke-linejoin="round"><rect x="2" y="4" width="20" height="16" rx="3"/><path d="m22 7-8.97 5.7a1.94 1.94 0 0 1-2.06 0L2 7"/></svg>
<div class="t c" style="left:414.8px;top:406.8px;letter-spacing:-0.162px;">gsosa@clinicasan...</div>
<div class="t c" style="left:510px;top:405.1px;letter-spacing:-0.212px;">Clínica Santa Lucía...</div>
<div class="t c dt" style="left:614.5px;top:406.9px;letter-spacing:-0.079px;">Feb 10, 2026 10:59 AM</div>
<svg class="abs" style="left:722.3px;top:405.2px" width="12" height="12" viewBox="0 0 24 24" fill="none" stroke="#374151" stroke-width="2.5" stroke-linecap="round" stroke-linejoin="round"><rect x="2" y="4" width="20" height="16" rx="3"/><path d="m22 7-8.97 5.7a1.94 1.94 0 0 1-2.06 0L2 7"/></svg>
<div class="t c" style="left:737.2px;top:406.8px;letter-spacing:-0.305px;">1 week ago</div>
<div class="abs tag" style="left:831.2px;top:403.4px;width:37.5px"></div>
<div class="t c" style="left:836.6px;top:406.0px;color:#333d4d;letter-spacing:-0.141px;">clinica</div>
<div class="abs" style="left:155.4px;top:190px;width:775px;height:7.8px;overflow:hidden"><div class="abs" style="left:25.3px;top:-15.4px;width:19px;height:19px;border-radius:50%;background:#ddd6fe"></div><div class="abs" style="left:676.1px;top:-13.8px;width:36px;height:15.6px;border-radius:8px;background:#f3f4f6"></div></div>
<div class="abs" style="left:163px;top:423px;width:750.5px;height:2px;background:#d3d6da;border-radius:1px"></div>
<div class="abs" style="left:929px;top:250.6px;width:2px;height:81px;background:#cfd2d6;border-radius:1px"></div>
<div class="t" style="left:161.8px;top:437px;font-size:9.6px;color:#374151;letter-spacing:-0.12px;-webkit-text-stroke:0.2px #374151">Página 1 de 629</div>
<div class="abs" style="left:755px;top:430.6px;width:47.0px;height:21.4px;border-radius:3.5px;background:#fff;border:1px solid #e5e7eb"></div>
<div class="t" style="left:764.4px;top:436.5px;font-size:9.8px;color:#1f2937;-webkit-text-stroke:0.25px #1f2937;font-size:10.2px;">20</div>
<svg class="abs" style="left:785px;top:439.2px" width="8" height="5" viewBox="0 0 8 5" fill="none" stroke="#374151" stroke-width="1.35" stroke-linecap="round" stroke-linejoin="round"><path d="M1 1 L4 4 L7 1"/></svg>
<div class="abs" style="left:806px;top:430.6px;width:41.0px;height:21.4px;border-radius:3.5px;background:#fff;border:1px solid #e5e7eb"></div>
<div class="t" style="left:818.6px;top:436.5px;font-size:9.8px;color:#a3a9b3;-webkit-text-stroke:0.15px #a3a9b3;">Prev</div>
<div class="abs" style="left:854px;top:430.6px;width:21.0px;height:21.4px;border-radius:3.5px;background:#fff;border:1px solid #2f6fed"></div>
<div class="t" style="left:862px;top:436.5px;font-size:9.8px;color:#1b5ae8;-webkit-text-stroke:0.1px #1b5ae8;">1</div>
<div class="abs" style="left:882px;top:430.6px;width:42.0px;height:21.4px;border-radius:3.5px;background:#fff;border:1px solid #e5e7eb"></div>
<div class="t" style="left:891.2px;top:436.5px;font-size:9.8px;color:#1f2937;-webkit-text-stroke:0.3px #1f2937;letter-spacing:0.15px;">Next</div>
</div>
</body></html>
